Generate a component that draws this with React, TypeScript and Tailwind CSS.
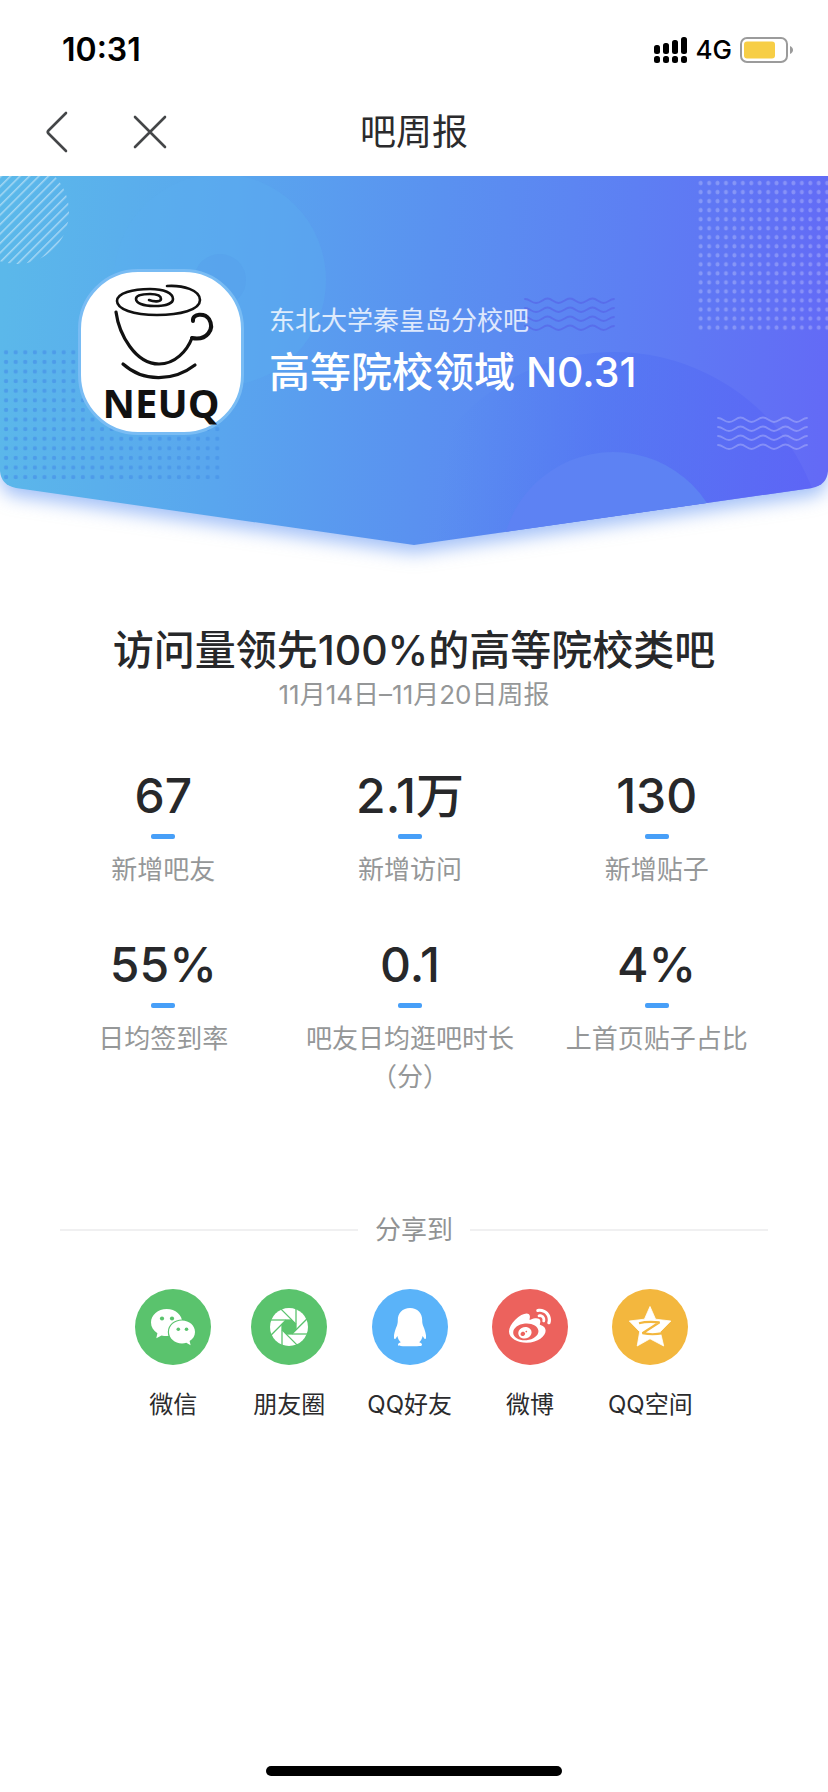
import React from 'react';
import { FaWeibo } from 'react-icons/fa';

const stats = [
  { value: '67', label: '新增吧友' },
  { value: '2.1万', label: '新增访问' },
  { value: '130', label: '新增贴子' },
  { value: '55%', label: '日均签到率' },
  { value: '0.1', label: '吧友日均逛吧时长（分）' },
  { value: '4%', label: '上首页贴子占比' },
];

const StatusBar = () => (
  <div className="flex h-[88px] items-center justify-between pl-[62px] pr-[34px] pt-3 text-black">
    <span className="text-[32px] font-semibold leading-9">10:31</span>
    <div className="flex items-center gap-2">
      <svg className="h-[27px] w-[34px]" viewBox="0 0 34 27" aria-hidden="true">
        <rect x="0" y="8" width="6" height="9" rx="2.5" />
        <rect x="9" y="6" width="6" height="11" rx="2.5" />
        <rect x="18" y="3" width="6" height="14" rx="2.5" />
        <rect x="27" y="0" width="6" height="17" rx="2.5" />
        {[0, 9, 18, 27].map((x) => (
          <rect key={x} x={x} y="19" width="6" height="7" rx="2.5" />
        ))}
      </svg>
      <span className="text-[26px] font-medium leading-9">4G</span>
      <svg className="h-[26px] w-[54px]" viewBox="0 0 54 26" aria-hidden="true">
        <rect x="1" y="1" width="46" height="24" rx="6" fill="none" stroke="#9b9b9b" strokeWidth="2" />
        <rect x="4" y="4.500" width="31" height="17" rx="3" fill="#f7ce46" />
        <path d="M50 9c4 1.500 4 6.500 0 8z" fill="#9b9b9b" />
      </svg>
    </div>
  </div>
);

const NavBar = () => (
  <header className="relative z-10 grid h-[88px] grid-cols-[1fr_auto_1fr] items-center bg-white">
    <div className="flex items-center gap-[62px] pl-[44px]">
      <button type="button" aria-label="返回">
        <svg className="h-11 w-[26px]" viewBox="0 0 26 44" fill="none" stroke="#444648" strokeWidth="2.600" strokeLinecap="round" strokeLinejoin="round">
          <path d="M22 3 L4.500 20.500 Q3 22 4.500 23.500 L22 41" />
        </svg>
      </button>
      <button type="button" aria-label="关闭">
        <svg className="h-9 w-9" viewBox="0 0 36 36" fill="none" stroke="#444648" strokeWidth="2.600" strokeLinecap="round">
          <path d="M3 3 L33 33 M33 3 L3 33" />
        </svg>
      </button>
    </div>
    <h1 className="text-[36px] leading-[48px] text-[#2b2b2d]">吧周报</h1>
  </header>
);

const Waves = ({ x, y, stroke, opacity }: { x: number; y: number; stroke: string; opacity: number }) => (
  <g fill="none" stroke={stroke} strokeOpacity={opacity} strokeWidth="1.800" strokeLinecap="round">
    {[0, 9, 18, 27].map((dy) => (
      <path
        key={dy}
        d={`M${x} ${y + dy} c5 0 6 4 11 4 s7 -4.500 11.500 -4.500 s6.500 4.500 11 4.500 s7 -4.500 11.500 -4.500 s6.500 4.500 11 4.500 s7 -4.500 11.500 -4.500 s6.500 4.500 11 4.500 s6 -4 10.500 -4`}
      />
    ))}
  </g>
);

const BannerArt = () => (
  <svg
    className="absolute inset-0 h-full w-full overflow-visible drop-shadow-[0_8px_9px_rgba(70,130,240,0.5)]"
    viewBox="0 0 828 369"
    preserveAspectRatio="none"
    aria-hidden="true"
  >
    <defs>
      <linearGradient id="sky" gradientUnits="userSpaceOnUse" x1="0" y1="150" x2="828" y2="220">
        <stop offset="0" stopColor="#5bb8ea" />
        <stop offset="0.27" stopColor="#59a6ee" />
        <stop offset="0.52" stopColor="#5a91f0" />
        <stop offset="0.75" stopColor="#5d7ff3" />
        <stop offset="1" stopColor="#636af6" />
      </linearGradient>
      <linearGradient id="hill" gradientUnits="userSpaceOnUse" x1="450" y1="250" x2="811" y2="300">
        <stop offset="0" stopColor="#4a7cf2" stopOpacity="0" />
        <stop offset="0.4" stopColor="#4f72f2" stopOpacity="0.5" />
        <stop offset="1" stopColor="#5c64f6" stopOpacity="0.8" />
      </linearGradient>
      <pattern id="dark-dots" patternUnits="userSpaceOnUse" x="1.300" y="171.500" width="9.600" height="9.600">
        <circle cx="4.800" cy="4.800" r="2.200" fill="#4894e8" fillOpacity="0.75" />
      </pattern>
      <pattern id="light-dots" patternUnits="userSpaceOnUse" x="696.500" y="2.500" width="8.430" height="9.030">
        <ellipse cx="4.200" cy="4.500" rx="2" ry="2.300" fill="#fff" fillOpacity="0.24" />
      </pattern>
      <pattern id="stripes" patternUnits="userSpaceOnUse" width="6.700" height="6.700" patternTransform="rotate(45)">
        <rect width="1.500" height="6.700" fill="#fff" fillOpacity="0.45" />
      </pattern>
      <clipPath id="flag">
        <path d="M0 0 H828 V295 Q827 309 812 312 L414 369 L16 312 Q1 309 0 295 Z" />
      </clipPath>
    </defs>
    <g clipPath="url(#flag)">
      <rect width="828" height="369" fill="url(#sky)" />
      <circle cx="220" cy="104" r="106" fill="#5cb0f2" fillOpacity="0.35" />
      <circle cx="220" cy="104" r="26" fill="#569fec" fillOpacity="0.5" />
      <circle cx="17" cy="36" r="52" fill="url(#stripes)" />
      <rect x="1.300" y="171.500" width="220.800" height="134.400" fill="url(#dark-dots)" />
      <circle cx="614" cy="388" r="212" fill="url(#hill)" />
      <circle cx="613" cy="388" r="112" fill="#5d82f3" />
      <rect x="696.500" y="2.500" width="132" height="153.500" fill="url(#light-dots)" />
      <Waves x={525} y={123} stroke="#5560e6" opacity={0.6} />
      <Waves x={718} y={242} stroke="#ffffff" opacity={0.25} />
    </g>
  </svg>
);

const Avatar = () => (
  <div className="h-[166px] w-[166px] shrink-0 rounded-[60px] border-[3px] border-[#79bcf4] bg-white">
    <svg className="h-full w-full overflow-visible" viewBox="0 0 160 160" fill="none" stroke="#111" strokeLinecap="round" role="img" aria-label="NEUQ">
      <path d="M86 14 C102 13 119 18 119 28 C119 38 99 43 76 43 C52 43 36 37 36 29 C36 21 52 17 69 17 C83 17 92 21 92 27 C92 32 83 34 73 34 C62 34 55 31 55 27 C55 23 62 22 69 22 C77 22 80 24 80 27 C80 30 73 30 68 28" strokeWidth="2.600" />
      <path d="M35 40 C38 62 54 92 78 92 C94 92 106 79 111 66" strokeWidth="3.200" />
      <path d="M112 49 C111 41 124 41 128 47 C134 57 126 69 111 66" strokeWidth="4" />
      <path d="M42 92 C62 110 92 110 114 93" strokeWidth="3.200" />
      <text x="80" y="146" textAnchor="middle" fill="#111" stroke="none" className="font-['Open_Sans'] text-[40px] font-bold">
        NEUQ
      </text>
    </svg>
  </div>
);

const Banner = () => (
  <section className="relative h-[369px]">
    <BannerArt />
    <div className="relative flex items-start gap-[25px] pl-[78px] pt-[93px]">
      <Avatar />
      <div className="pt-[33px]">
        <p className="text-[26px] leading-[38px] text-white/80">东北大学秦皇岛分校吧</p>
        <p className="mt-2 text-[41px] font-medium leading-[48px] text-white">高等院校领域 N0.31</p>
      </div>
    </div>
  </section>
);

const WechatIcon = () => (
  <svg viewBox="0 0 76 76" fill="#fff" aria-hidden="true">
    <path d="M31.700 20 C23 20 16 26 16 33.500 C16 37.900 18.300 41.600 22.400 44.200 L21.300 49.200 L26.500 46.400 C28.200 46.900 30 47.100 31.700 47.100 C40.500 47.100 47.300 41 47.300 33.500 C47.300 26 40.500 20 31.700 20 Z" />
    <path d="M47 31.600 C39.700 31.600 34 36.700 34 43 C34 49.400 39.700 54.400 47 54.400 C48.500 54.400 50 54.200 51.300 53.700 L55.600 56.200 L54.600 52 C58 50 60 46.800 60 43 C60 36.700 54.300 31.600 47 31.600 Z" stroke="#5ac36d" strokeWidth="2.400" paintOrder="stroke" />
    <g fill="#5ac36d">
      <circle cx="27" cy="29.500" r="2.100" />
      <circle cx="37" cy="29.500" r="2.100" />
      <circle cx="43.300" cy="40.300" r="1.800" />
      <circle cx="51.500" cy="40.300" r="1.800" />
    </g>
  </svg>
);

const MomentsIcon = () => (
  <svg viewBox="-38 -38 76 76" aria-hidden="true">
    <circle r="19" fill="#fff" />
    <path d="M7 2.900 L2.900 7 L-2.900 7 L-7 2.900 L-7 -2.900 L-2.900 -7 L2.900 -7 L7 -2.900 Z" fill="#5ac36d" />
    {[0, 45, 90, 135, 180, 225, 270, 315].map((deg) => (
      <path key={deg} d="M7 2.900 V-20" stroke="#5ac36d" strokeWidth="1.300" transform={`rotate(${deg})`} />
    ))}
  </svg>
);

const PenguinIcon = () => (
  <svg viewBox="0 0 76 76" fill="#fff" aria-hidden="true">
    <path d="M38 19 C45.500 19 50.200 24 50.200 31 C50.200 33 50.300 34.500 51 36.500 C52.800 41 54.500 45.500 54 49 C53.800 50.300 53 50.300 52.300 49.400 L50.600 47 C50.200 49.500 49 51.700 47.200 53.300 C49 53.900 50 54.800 50 55.800 C50 57 48.500 57.200 45 57.200 L31 57.200 C27.500 57.200 26 57 26 55.800 C26 54.800 27 53.900 28.800 53.300 C27 51.700 25.800 49.500 25.400 47 L23.700 49.400 C23 50.300 22.200 50.300 22 49 C21.500 45.500 23.200 41 25 36.500 C25.700 34.500 25.800 33 25.800 31 C25.800 24 30.500 19 38 19 Z" />
  </svg>
);

const QzoneIcon = () => (
  <svg viewBox="0 0 76 76" aria-hidden="true">
    <path d="M38 17.500 L43.600 30.200 L58.800 32 L48.300 42.700 L51.700 57 L38 49.800 L25.200 57 L27.700 42.700 L17.300 32 L32.400 30.200 Z" fill="#fff" stroke="#fff" strokeWidth="0.800" strokeLinejoin="round" />
    <path d="M27 34.200 C33 32.600 40 32.600 47.500 33.300 L30.500 44.200 C37 45.600 44 45.600 51 44.200" fill="none" stroke="#f3b73e" strokeWidth="2.200" strokeLinejoin="bevel" />
  </svg>
);

const targets = [
  { name: '微信', color: 'bg-[#5ac36d]', icon: <WechatIcon /> },
  { name: '朋友圈', color: 'bg-[#5ac36d]', icon: <MomentsIcon /> },
  { name: 'QQ好友', color: 'bg-[#5ab3f9]', icon: <PenguinIcon /> },
  { name: '微博', color: 'bg-[#ec625d]', icon: <FaWeibo className="mx-auto my-[17px] h-[42px] w-[42px]" /> },
  { name: 'QQ空间', color: 'bg-[#f3b73e]', icon: <QzoneIcon /> },
];

const Share = () => (
  <section className="mt-[115px]">
    <div className="flex items-center gap-[17px] px-[60px]">
      <div className="h-[2px] flex-1 bg-[#f0f0f1]" />
      <h3 className="text-[26px] leading-[38px] text-[#919394]">分享到</h3>
      <div className="h-[2px] flex-1 bg-[#f0f0f1]" />
    </div>
    <div className="mt-10 flex justify-center gap-10">
      {targets.map((t) => (
        <button key={t.name} type="button" className="flex flex-col items-center gap-6">
          <span className={`block h-[76px] w-[76px] rounded-full text-white ${t.color}`}>{t.icon}</span>
          <span className="text-[24px] leading-8 text-[#2b2b2d]">{t.name}</span>
        </button>
      ))}
    </div>
  </section>
);

const App = () => {
  return (
    <div className="flex min-h-screen flex-col bg-white font-[Inter,'Noto_Sans_CJK_SC',sans-serif]">
      <StatusBar />
      <NavBar />
      <main>
        <Banner />
        <div className="mt-[81px] text-center">
          <h2 className="text-[41px] font-medium leading-[48px] text-[#27282a]">访问量领先100%的高等院校类吧</h2>
          <p className="mt-[2px] text-[26px] leading-[38px] text-[#959798]">11月14日–11月20日周报</p>
        </div>
        <dl className="mt-[54px] grid grid-cols-3 gap-y-12 pl-10 pr-12 text-center">
          {stats.map((s) => (
            <div key={s.label} className="flex flex-col-reverse items-center justify-end">
              <dt className="mt-3 text-[26px] leading-[38px] text-[#959798]">{s.label}</dt>
              <dd className="flex flex-col items-center gap-[10px]">
                <span className="text-[48px] font-medium leading-[56px] text-[#27282a]">{s.value}</span>
                <span className="h-[5px] w-6 rounded-[2px] bg-[#479ff8]" />
              </dd>
            </div>
          ))}
        </dl>
        <Share />
      </main>
      <div className="mt-auto flex justify-center pb-4">
        <div className="h-[10px] w-[296px] rounded-full bg-black" />
      </div>
    </div>
  );
};

export default App;
